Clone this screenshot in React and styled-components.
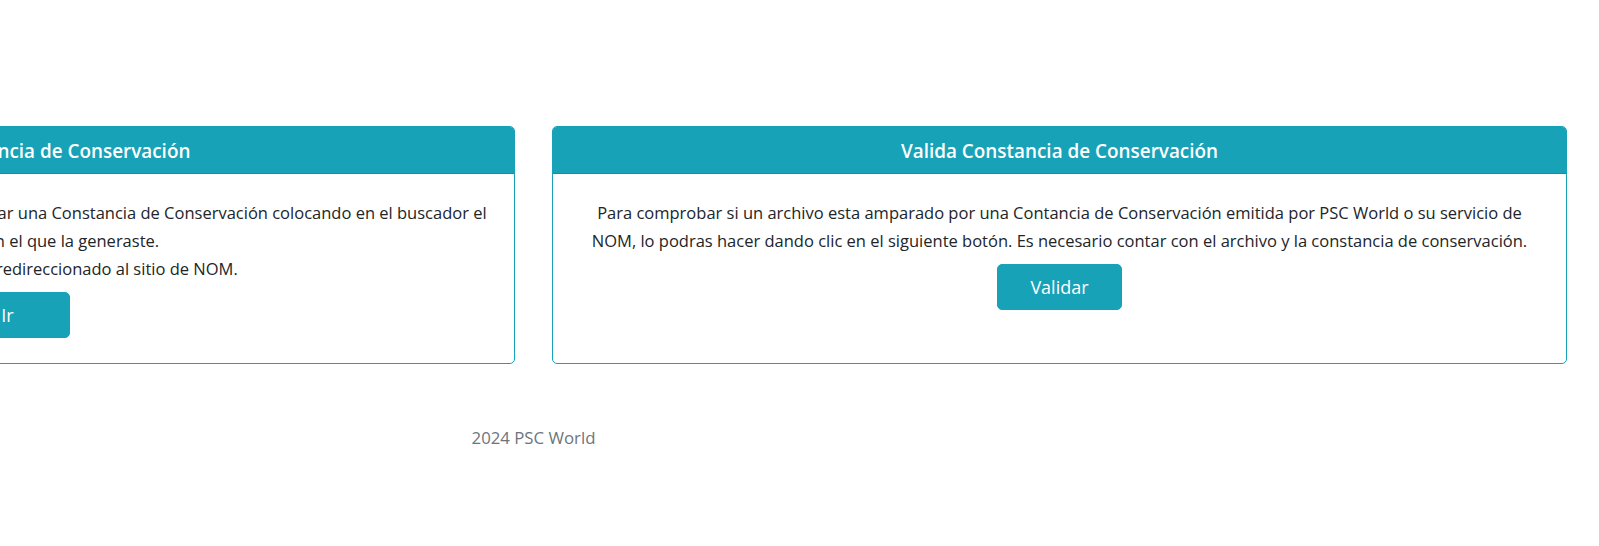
import React from 'react';
import styled, { createGlobalStyle } from 'styled-components';

const GlobalStyle = createGlobalStyle`
  html, body {
    margin: 0;
    background: #fff;
    overflow: hidden;
  }
  body {
    font-family: "Open Sans", "Noto Sans", Arial, sans-serif;
    color: #212529;
  }
`;

// the page is wider than the window; the row hangs off to the left
const Viewport = styled.div`
  display: flex;
  justify-content: flex-end;
  padding: 126px 32px 0 0;
  overflow: hidden;
`;

const Container = styled.div`
  flex: 0 0 2067px;
  display: flex;
  flex-direction: column;
`;

const CardRow = styled.div`
  display: grid;
  grid-template-columns: 1fr 1fr;
  gap: 37px;
`;

const Card = styled.section`
  display: flex;
  flex-direction: column;
  border: 1px solid #17a2b8;
  border-radius: 5px;
  overflow: hidden;
  background: #fff;
`;

const CardHeader = styled.header`
  background: #17a2b8;
  border-bottom: 1px solid #148ea1;
  padding: 11px 20px 9px;
  text-align: center;
`;

const CardTitle = styled.h5`
  margin: 0;
  color: #fff;
  font-size: 18.9px;
  font-weight: 600;
  line-height: 26px;
`;

const CardBody = styled.div`
  flex: 1;
  padding: 25px 24px 25px;
  text-align: center;
`;

const CardText = styled.p`
  margin: 0;
  font-size: 16.5px;
  line-height: 28px;
`;

const InfoButton = styled.button`
  margin-top: 9px;
  width: 125px;
  height: 46px;
  border: 1px solid #17a2b8;
  border-radius: 5px;
  background: #17a2b8;
  color: #fff;
  font-family: inherit;
  font-size: 18px;
  cursor: pointer;
`;

const Footer = styled.footer`
  margin-top: 62px;
  text-align: center;
  color: #6c757d;
  font-size: 16.8px;
  line-height: 24px;
`;

export default function App() {
  return (
    <>
      <GlobalStyle />
      <Viewport>
        <Container>
          <CardRow>
            <Card>
              <CardHeader>
                <CardTitle>Consulta tu Constancia de Conservación</CardTitle>
              </CardHeader>
              <CardBody>
                <CardText>
                  Si generaste tu constancia en el sitio de NOM, podrás consultar una Constancia de Conservación colocando en el buscador el
                  <br />
                  código del folio con el que la generaste.
                  <br />
                  Al dar clic en el botón, serás redireccionado al sitio de NOM.
                </CardText>
                <InfoButton>Ir</InfoButton>
              </CardBody>
            </Card>
            <Card>
              <CardHeader>
                <CardTitle>Valida Constancia de Conservación</CardTitle>
              </CardHeader>
              <CardBody>
                <CardText>
                  Para comprobar si un archivo esta amparado por una Contancia de Conservación emitida por PSC World o su servicio de NOM, lo podras hacer dando clic en el siguiente botón. Es necesario contar con el archivo y la constancia de conservación.
                </CardText>
                <InfoButton>Validar</InfoButton>
              </CardBody>
            </Card>
          </CardRow>
          <Footer>2024 PSC World</Footer>
        </Container>
      </Viewport>
    </>
  );
}
